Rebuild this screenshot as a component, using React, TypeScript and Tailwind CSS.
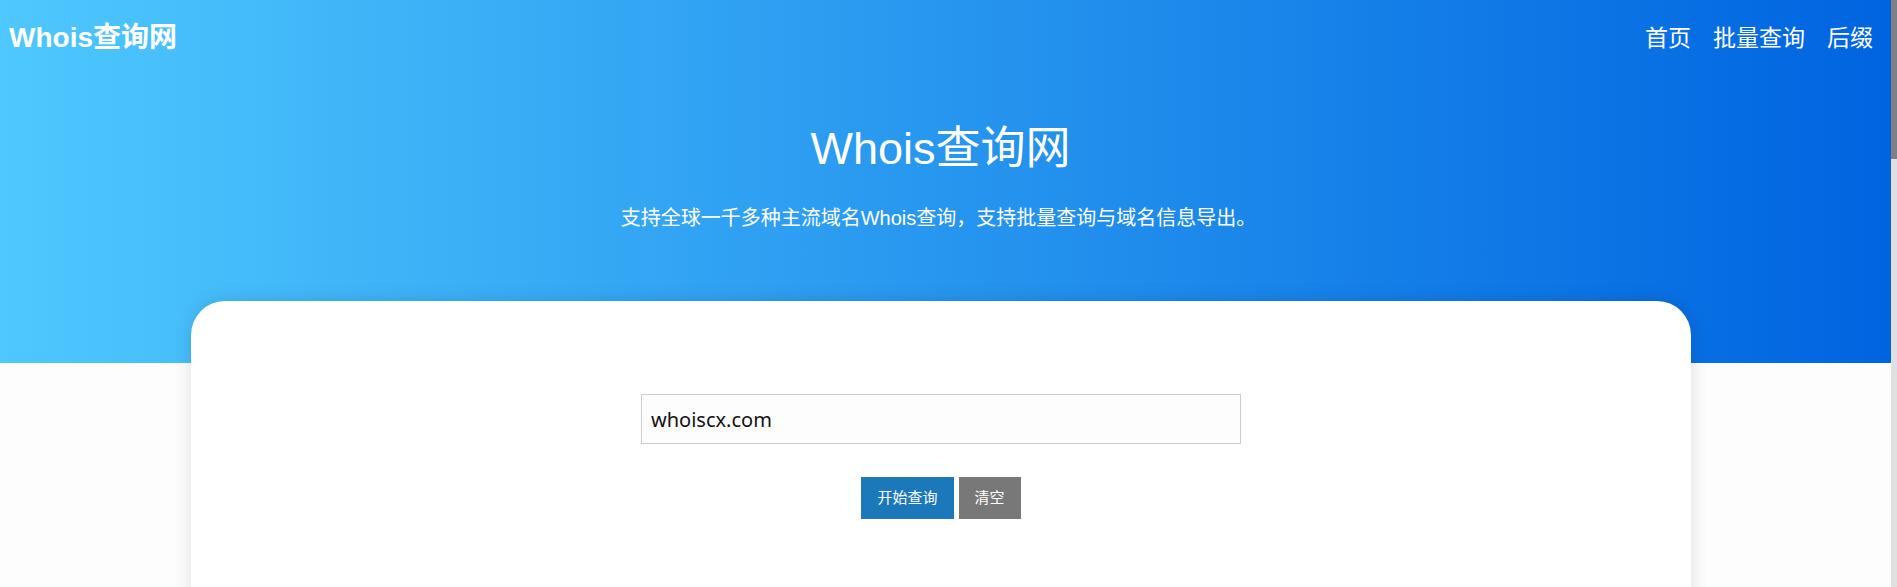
import React from 'react';

const cjk = "font-['Liberation_Sans','Noto_Sans_CJK_SC',sans-serif]";

function Header() {
  return (
    <header className="flex h-[76px] items-center justify-between pl-[9px] pr-[18px] text-white">
      <div className={`${cjk} text-[28px] font-bold leading-none`}>Whois查询网</div>
      <nav className={`${cjk} flex items-center gap-[22px] text-[23px] leading-none`}>
        <a href="#">首页</a>
        <a href="#">批量查询</a>
        <a href="#">后缀</a>
      </nav>
    </header>
  );
}

function SearchCard() {
  return (
    <div className="mx-auto -mt-[62px] h-[400px] w-[1500px] rounded-[34px] bg-white pt-[93px] shadow-[0_0_18px_rgba(0,0,0,0.13)]">
      <div className="mx-auto w-[600px]">
        <input
          defaultValue="whoiscx.com"
          className="h-[50px] w-full border border-[#cccccc] bg-[#fdfdfd] pl-[9px] font-['Noto_Sans',sans-serif] text-[20px] text-[#111] outline-none"
        />
      </div>
      <div className={`${cjk} mt-[33px] flex justify-center gap-[5px] text-[15px] text-white`}>
        <button className="h-[42px] bg-[#1b78bb] px-4">开始查询</button>
        <button className="h-[42px] bg-[#787878] px-4">清空</button>
      </div>
    </div>
  );
}

export default function App() {
  return (
    <div className="flex h-[587px] w-full overflow-hidden bg-[#fdfdfd]">
      <main className="flex-1">
        <section className="h-[363px] bg-[linear-gradient(to_right,#4ec8fe,#0064e0)]">
          <Header />
          <div className={`${cjk} pr-[10px] text-center text-white`}>
            <h1 className="mt-[46px] text-[45px] font-normal leading-[1.2]">Whois查询网</h1>
            <p className="mt-[27px] pr-[4px] text-[20px] leading-[30px]">
              支持全球一千多种主流域名Whois查询，支持批量查询与域名信息导出。
            </p>
          </div>
        </section>
        <div className="pr-[9px]">
          <SearchCard />
        </div>
      </main>
      <div className="flex w-[6px] flex-col bg-[#e0e0e0]">
        <div className="h-[159px] bg-[#808080]" />
      </div>
    </div>
  );
}
